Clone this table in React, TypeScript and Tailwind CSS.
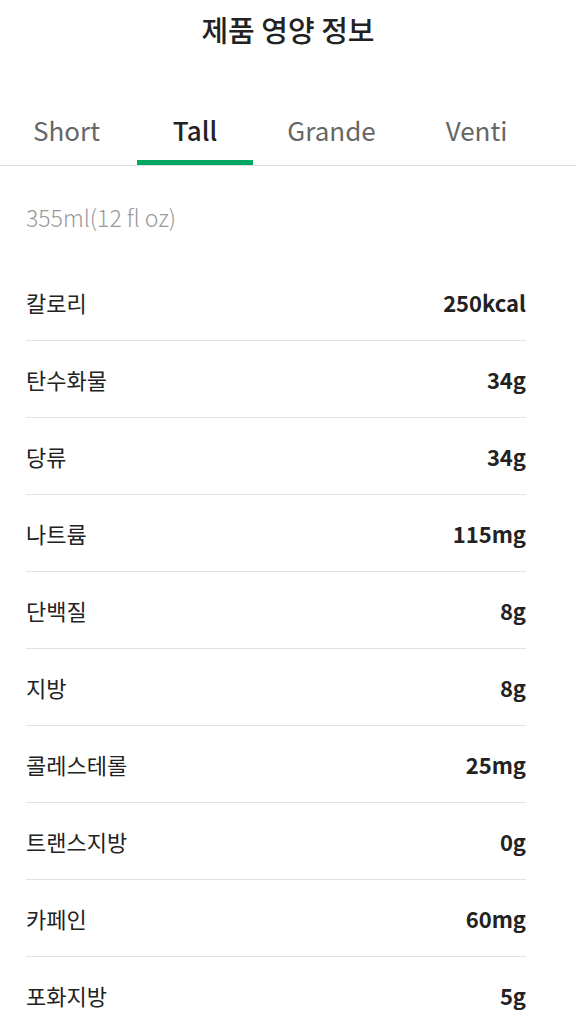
import { useState } from "react";

const tabs = [
  { name: "Short", width: "w-[137px] pr-[4px]" },
  { name: "Tall", width: "w-[116px]" },
  { name: "Grande", width: "w-[157px]" },
  { name: "Venti", width: "w-[133px]" },
];

const nutrition = [
  { label: "칼로리", value: "250kcal" },
  { label: "탄수화물", value: "34g" },
  { label: "당류", value: "34g" },
  { label: "나트륨", value: "115mg" },
  { label: "단백질", value: "8g" },
  { label: "지방", value: "8g" },
  { label: "콜레스테롤", value: "25mg" },
  { label: "트랜스지방", value: "0g" },
  { label: "카페인", value: "60mg" },
  { label: "포화지방", value: "5g" },
];

export default function App() {
  const [active, setActive] = useState("Tall");

  return (
    <div className="min-h-screen w-full bg-white font-['Noto_Sans_CJK_KR','Noto_Sans',sans-serif] text-[#222]">
      <header className="flex h-[58px] items-center justify-center">
        <h1 className="text-[29px] font-medium leading-none">제품 영양 정보</h1>
      </header>

      <nav className="mt-[54px] flex border-b border-[#dddddd]">
        {tabs.map((tab) => (
          <button
            key={tab.name}
            type="button"
            onClick={() => setActive(tab.name)}
            className={`${tab.width} shrink-0 border-b-[5px] pb-[12px] text-[26px] leading-[36px] ${
              active === tab.name
                ? "border-[#00a862] font-medium text-[#222]"
                : "border-transparent text-[#666]"
            }`}
          >
            {tab.name}
          </button>
        ))}
      </nav>

      <section className="px-[26px]">
        <p className="mt-[36px] text-[23px] font-light leading-[30px] text-[#999]">
          355ml(12 fl oz)
        </p>
        <ul className="mt-[32px] w-[500px]">
          {nutrition.map((item) => (
            <li
              key={item.label}
              className="flex h-[77px] items-center justify-between border-b border-[#e2e2e2]"
            >
              <span className="text-[22px] leading-none">{item.label}</span>
              <span className="text-[22px] font-bold leading-none">{item.value}</span>
            </li>
          ))}
        </ul>
      </section>
    </div>
  );
}
